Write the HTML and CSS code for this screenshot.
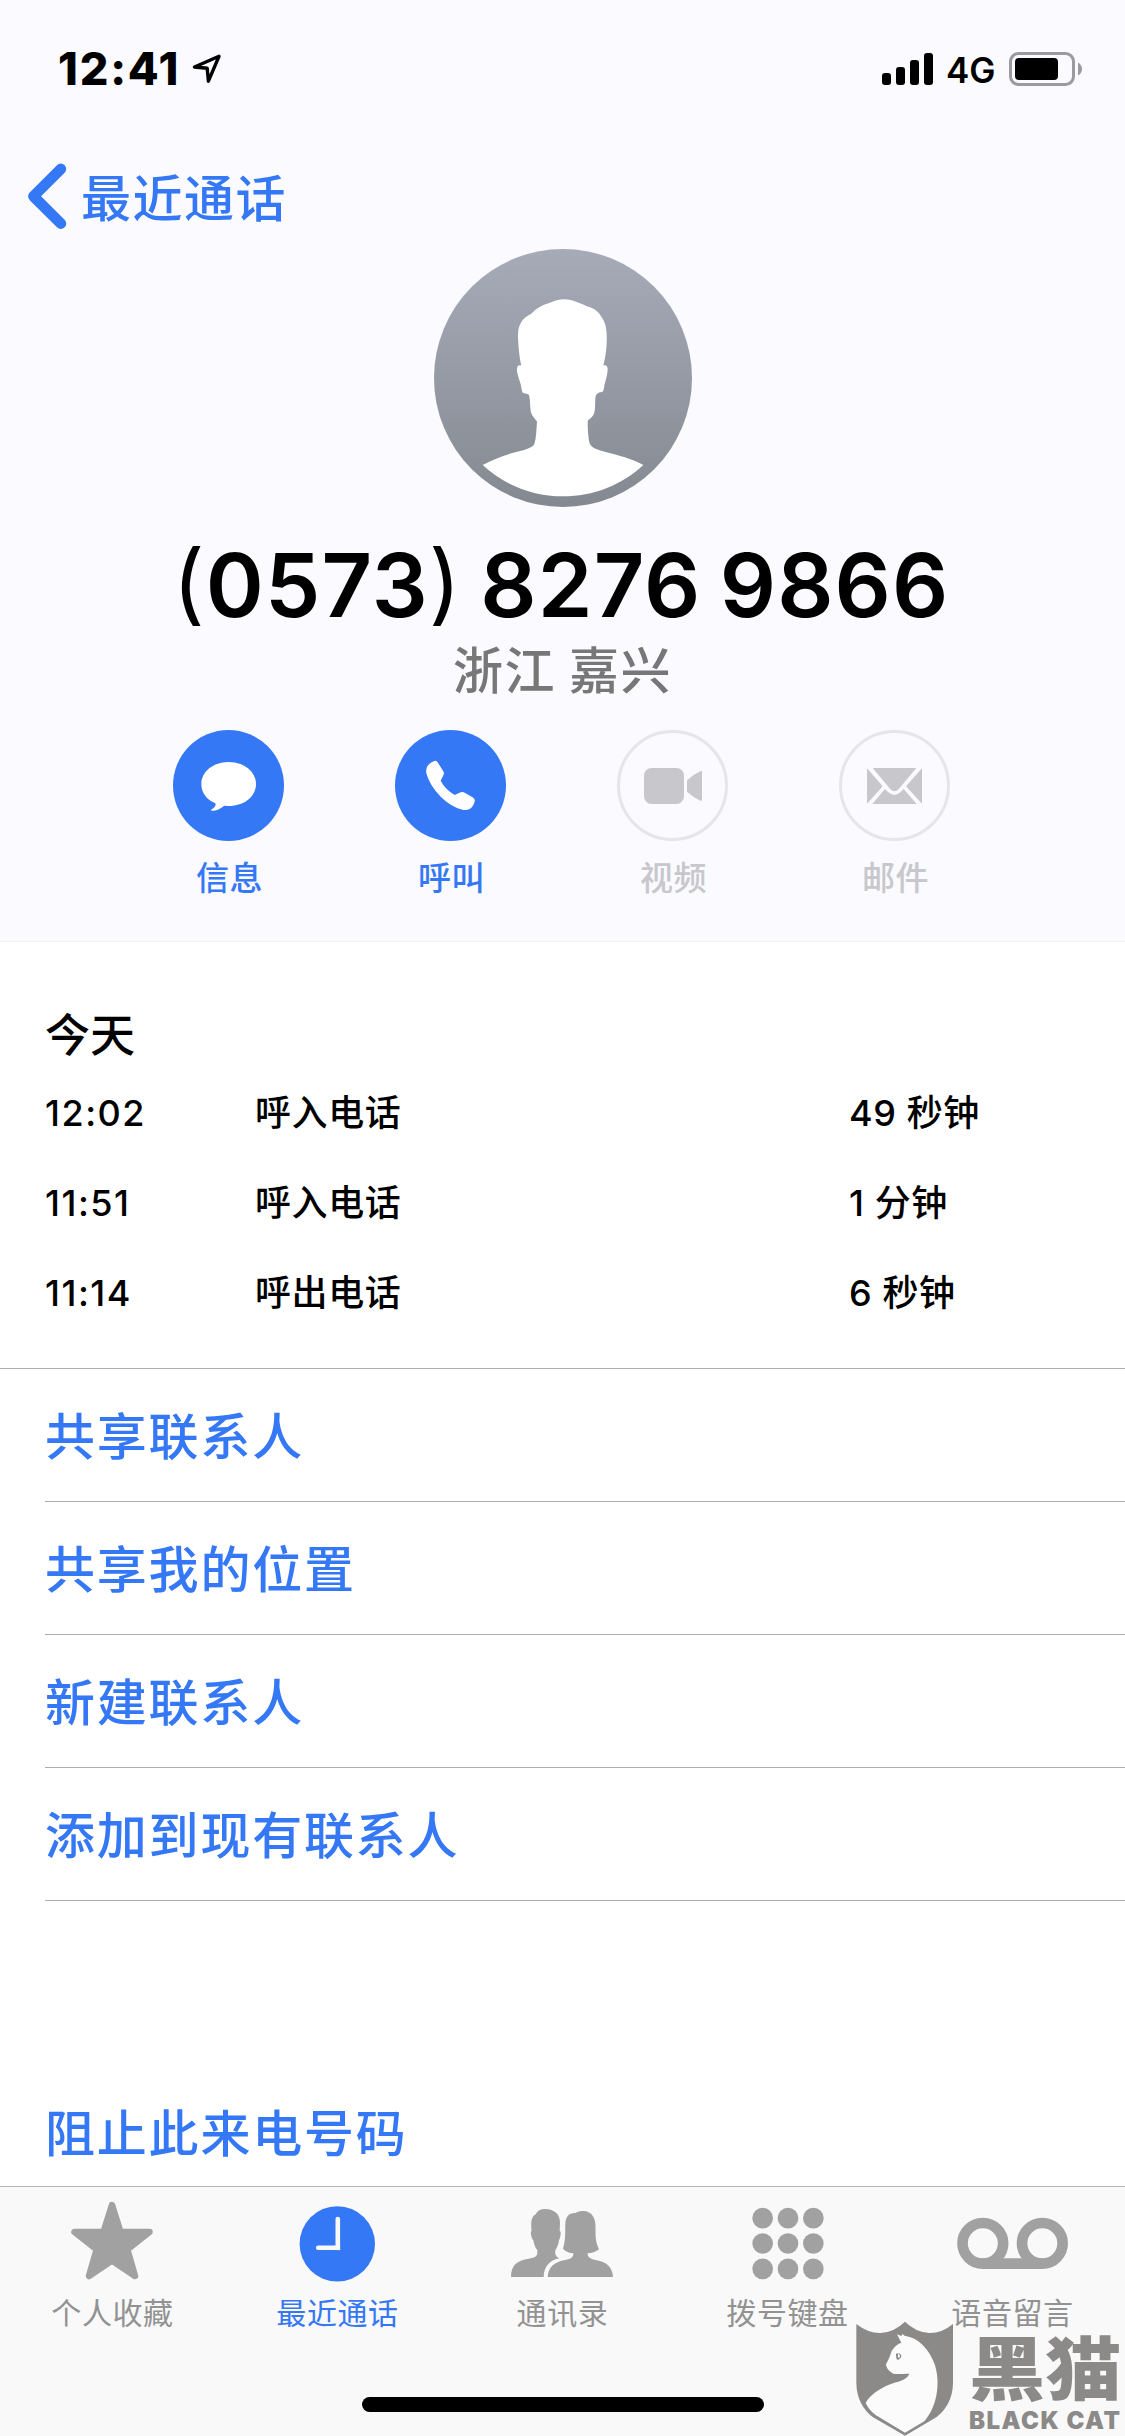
FILE: index.html
```html
<!DOCTYPE html>
<html lang="zh-CN">
<head>
<meta charset="utf-8">
<title>最近通话</title>
<link rel="stylesheet" href="styles.css">
</head>
<body>
<div class="phone">
  <header class="header">
    <div class="status">
      <span class="clock">12:41</span>
      <svg class="location" width="32" height="32" viewBox="191 53 32 32"><path d="M219 56.300 194.500 67l12.700 1.300 1.200 12.900Z" fill="none" stroke="#000" stroke-width="3.400" stroke-linejoin="round"/></svg>
      <span class="spacer"></span>
      <svg class="signal" width="52" height="34" viewBox="882 52 52 34"><rect x="882" y="73" width="9" height="12" rx="3"/><rect x="896" y="67" width="9" height="18" rx="3"/><rect x="910" y="60" width="9" height="25" rx="3"/><rect x="924" y="53" width="9" height="32" rx="3"/></svg>
      <span class="network">4G</span>
      <svg class="battery" width="74" height="34" viewBox="1009 52 74 34"><rect x="1010.500" y="53.500" width="63" height="31" rx="8" fill="none" stroke="#9b9b9e" stroke-width="3"/><rect x="1015" y="58" width="43" height="22" rx="4"/><path d="M1078 62.500q4 2.500 4 6.500t-4 6.500Z" fill="#9b9b9e"/></svg>
    </div>

    <nav class="nav">
      <svg width="40" height="68" viewBox="27 162 40 68"><path d="M60.800 169 33.500 196.300 60.800 223.500" fill="none" stroke="#3478f6" stroke-width="10.800" stroke-linecap="round" stroke-linejoin="round"/></svg>
      <span class="back">最近通话</span>
    </nav>

    <svg class="avatar" width="258" height="258" viewBox="42 26 774 774">
      <defs><linearGradient id="shade" x1="0" y1="0" x2="0" y2="1"><stop offset="0" stop-color="#a7abb8"/><stop offset="1" stop-color="#848991"/></linearGradient></defs>
      <circle cx="429" cy="413" r="387" fill="url(#shade)"/>
      <path fill="#fff" d="M432 177C455 177 478 188 497 196C513 202 525 204 537 219C545 231 554 243 557 257C563 285 561 337 550 375C560 373 563 377 563 389C561 411 555 425 553 436C551 449 550 454 545 455C535 457 527 459 526 475C525 497 526 511 521 522C515 535 503 538 503 545C503 570 505 595 509 609C514 624 535 629 557 635C595 645 636 655 670 674C604 735 520 768 429 768C338 768 254 735 188 674C220 658 258 642 289 635C312 629 337 623 343 611C349 592 349 570 351 543C345 535 334 525 332 511C330 495 331 480 327 464C322 457 308 463 306 452C304 438 301 427 297 416C292 402 290 391 291 384C292 376 296 373 304 375C298 351 295 317 294 292C293 270 297 256 304 245C315 226 328 226 337 217C350 203 370 193 388 188C404 182 416 177 432 177Z"/>
    </svg>
    <h1 class="number"><span class="paren">(</span>0573<span class="paren">)</span> 8276 9866</h1>
    <div class="region">浙江 嘉兴</div>

    <div class="actions">
      <div class="action">
        <svg width="111" height="111" viewBox="69 60 333 333"><circle cx="235.500" cy="226.500" r="166.500" fill="#3478f6"/><path fill="#fff" d="M236 156C282 156 318 185 318 222C318 260 282 288 236 288L223 287C210 297 198 303 185 302C181 301 183 299 187 297C195 291 199 285 196 280C170 269 154 248 154 222C154 185 190 156 236 156Z"/></svg>
        <span>信息</span>
      </div>
      <div class="action">
        <svg width="111" height="111" viewBox="735 60 333 333"><circle cx="901.500" cy="226.500" r="166.500" fill="#3478f6"/><path fill="#fff" d="M851 154Q858 150 863 157L879 182Q884 189 880 196L872 212Q885 237 914 255L932 247Q938 244 944 248L968 262Q976 267 974 275Q970 290 959 297Q951 301 937 299Q902 290 872 260Q839 227 829 190Q825 164 851 154Z"/></svg>
        <span>呼叫</span>
      </div>
      <div class="action disabled">
        <svg width="111" height="111" viewBox="141 60 333 333"><circle cx="307.500" cy="226.500" r="162" fill="none" stroke="#e5e5ea" stroke-width="9"/><g fill="#c7c7cc"><rect x="222" y="174" width="120" height="108" rx="23"/><path d="M351 211Q371 193 391 184Q396 181 396 186V269Q396 274 391 272Q371 263 351 245Z"/></g></svg>
        <span>视频</span>
      </div>
      <div class="action disabled">
        <svg width="111" height="111" viewBox="807 60 333 333"><circle cx="973.500" cy="226.500" r="162" fill="none" stroke="#e5e5ea" stroke-width="9"/><g fill="#c7c7cc"><path d="M908 174H1039L987 236Q973 251 960 236Z"/><path d="M891 175 938 229 891 281ZM1056 175 1008 229 1056 281Z"/><path d="M907 282 945 237 955 247Q973 263 991 247L1001 237 1040 282Z"/></g></svg>
        <span>邮件</span>
      </div>
    </div>
  </header>

  <main class="main">
    <section class="log">
      <h2>今天</h2>
      <div class="call"><span class="time">12:02</span><span>呼入电话</span><span>49 秒钟</span></div>
      <div class="call"><span class="time">11:51</span><span>呼入电话</span><span>1 分钟</span></div>
      <div class="call"><span class="time">11:14</span><span>呼出电话</span><span>6 秒钟</span></div>
    </section>
    <ul class="links">
      <li>共享联系人</li>
      <li>共享我的位置</li>
      <li>新建联系人</li>
      <li>添加到现有联系人</li>
    </ul>
    <div class="block">阻止此来电号码</div>
  </main>

  <footer class="tabs">
    <div class="tab">
      <svg width="225" height="100" viewBox="0 0 225 100"><path d="M112 18 120.500 45H149.500L127.300 62.500 135 89 112 73.500 89 89 96.700 62.500 74.500 45H103.500Z" fill="#a1a1a1" stroke="#a1a1a1" stroke-width="6.500" stroke-linejoin="round"/></svg>
      <span>个人收藏</span>
    </div>
    <div class="tab active">
      <svg width="225" height="100" viewBox="225 2187 225 100"><circle cx="337.300" cy="2243.900" r="37.700" fill="#3478f6"/><path d="M337.800 2219V2247.800H318.200" fill="none" stroke="#f9f9f9" stroke-width="4.600" stroke-linecap="round"/><path d="M335.500 2245.500h4.600v4.600h-4.600z" fill="#f9f9f9"/></svg>
      <span>最近通话</span>
    </div>
    <div class="tab">
      <svg width="225" height="100" viewBox="-30 21 675 300"><g fill="#a1a1a1"><path d="M255 87C283 87 301 103 300 130L299 152C305 155 301 174 297 181C295 197 290 203 286 212C284 222 288 231 299 235C271 239 251 260 251 291H153C153 258 170 243 199 238C219 234 232 231 232 219V211C224 202 222 190 220 181C214 174 210 157 215 151C212 130 213 110 227 103C232 92 242 87 255 87Z"/><path d="M347 99C353 95 361 93 371 93C392 94 405 110 406 132C408 163 403 177 417 208C407 217 395 219 383 220C382 231 390 236 403 239C440 245 457 259 459 291H263C265 260 284 245 316 240C333 237 341 232 340 220C328 219 317 215 309 206C318 176 315 151 316 130C317 109 327 98 347 99Z"/></g></svg>
      <span>通讯录</span>
    </div>
    <div class="tab">
      <svg width="225" height="100" viewBox="645 21 675 300"><g fill="#a1a1a1"><circle cx="908" cy="114.500" r="31"/><circle cx="984" cy="114.500" r="31"/><circle cx="1060" cy="114.500" r="31"/><circle cx="908" cy="190.500" r="31"/><circle cx="984" cy="190.500" r="31"/><circle cx="1060" cy="190.500" r="31"/><circle cx="908" cy="266.500" r="31"/><circle cx="984" cy="266.500" r="31"/><circle cx="1060" cy="266.500" r="31"/></g></svg>
      <span>拨号键盘</span>
    </div>
    <div class="tab">
      <svg width="225" height="100" viewBox="180 21 675 300"><g fill="none" stroke="#a1a1a1" stroke-width="32"><circle cx="428.500" cy="190" r="61"/><circle cx="607" cy="190" r="61"/><path d="M428 251H607"/></g></svg>
      <span>语音留言</span>
    </div>
  </footer>
  <div class="home"></div>

  <div class="watermark">
    <svg width="98" height="115" viewBox="48 422 294 345">
      <path fill="#8c8989" d="M49 431Q85 459 122 458Q162 456 195 424Q228 456 268 458Q305 459 339 431V607C339 655 316 690 290 710L195 766 98 710C71 688 49 655 49 607Z"/>
      <path fill="#fbfbfb" d="M171 462 184 467 187 461 194 466C235 472 267 505 284 552C303 611 290 681 253 723L195 757 108 705C93 694 83 681 77 668C90 642 126 619 168 606C190 600 203 593 208 580C189 580 173 583 160 580C148 574 138 562 138 552C148 535 151 523 155 512C163 498 175 490 184 487Z"/>
      <path fill="#8c8989" d="M168 520Q180 516 184 526Q183 537 171 538Q167 532 168 520Z"/><path fill="#fbfbfb" d="M175 519 173 529 178 534 180 526Z"/>
    </svg>
    <div class="brand"><div class="brand-cn">黑猫</div><div class="brand-en">BLACK CAT</div></div>
  </div>
</div>
</body>
</html>
```
FILE: styles.css
```css
* { box-sizing: border-box; margin: 0; padding: 0; }
body { background: #fff; font-family: Inter, "Noto Sans CJK SC", sans-serif; }
svg { display: block; flex: none; }
.phone { position: relative; width: 1125px; height: 2436px; overflow: hidden; display: flex; flex-direction: column; background: #fff; color: #000; }

.header { height: 942px; flex: none; display: flex; flex-direction: column; align-items: center; background: #fafaff; border-bottom: 1px solid #efeff4; }
.status { width: 100%; height: 138px; padding: 0 42px 0 58px; display: flex; align-items: center; }
.clock { width: 133px; font-size: 45px; font-weight: 800; line-height: 60px; letter-spacing: 1.8px; white-space: nowrap; }
.spacer { flex: 1; }
.network { width: 49px; margin: 1px 14px 0 12px; font-size: 35px; font-weight: 600; line-height: 40px; }

.nav { width: 100%; height: 111px; padding: 4px 0 0 27px; display: flex; align-items: center; gap: 14px; }
.back { padding-top: 6px; color: #3478f6; font-size: 50px; font-weight: 500; letter-spacing: 1.5px; line-height: 60px; }
.number { margin: 28px 3px 0 0; height: 100px; line-height: 100px; font-size: 88px; font-weight: 600; letter-spacing: 1.1px; word-spacing: -5px; white-space: nowrap; }
.paren { font-weight: 400; position: relative; top: -3px; }
.region { height: 60px; margin-top: 6px; line-height: 60px; color: #777; font-size: 50px; font-weight: 500; letter-spacing: 1.5px; word-spacing: -2px; }

.actions { margin: 29px 2px 0 0; display: flex; gap: 111px; }
.action { width: 111px; display: flex; flex-direction: column; align-items: center; color: #3478f6; font-size: 33px; font-weight: 500; line-height: 40px; letter-spacing: 0.6px; gap: 17px; }
.action span { padding-left: 2px; }
.disabled { color: #c7c7cc; }

.main { height: 1244px; flex: none; }
.log { height: 427px; border-bottom: 1px solid #adadad; padding: 63px 45px 0; }
.log h2 { height: 63px; line-height: 62px; font-size: 45px; font-weight: 500; }
.call { height: 90px; display: grid; grid-template-columns: 210px 594px 1fr; font-size: 36px; line-height: 91px; font-weight: 500; letter-spacing: 0.6px; }
.time { font-weight: 500; letter-spacing: 1.5px; }
.links { list-style: none; padding-left: 45px; }
.links li, .block { color: #3478f6; font-size: 50px; letter-spacing: 1.8px; font-weight: 500; line-height: 136px; }
.links li { height: 133px; border-bottom: 1px solid #adadad; }
.block { margin: 165px 0 0 45px; height: 120px; }

.tabs { height: 250px; flex: none; border-top: 1px solid #b2b2b2; background: #f9f9f9; display: grid; grid-template-columns: repeat(5, 225px); align-content: start; }
.tab { display: flex; flex-direction: column; align-items: center; color: #929292; font-size: 30px; font-weight: 400; letter-spacing: 0.6px; line-height: 52px; }
.active { color: #3478f6; }
.home { position: absolute; left: 362px; top: 2397px; width: 402px; height: 15px; border-radius: 8px; background: #000; }

.watermark { position: absolute; left: 856px; top: 2321px; width: 269px; height: 115px; display: flex; color: #8c8989; }
.brand { padding: 8px 0 0 15px; }
.brand-cn { width: 152px; height: 72px; font: 900 74px/72px "Noto Sans CJK SC", sans-serif; white-space: nowrap; transform: scale(1.03, 0.94); transform-origin: 0 50%; }
.brand-en { height: 24px; margin-top: 8px; font-size: 24px; font-weight: 900; line-height: 24px; letter-spacing: 1.5px; white-space: nowrap; }
```
